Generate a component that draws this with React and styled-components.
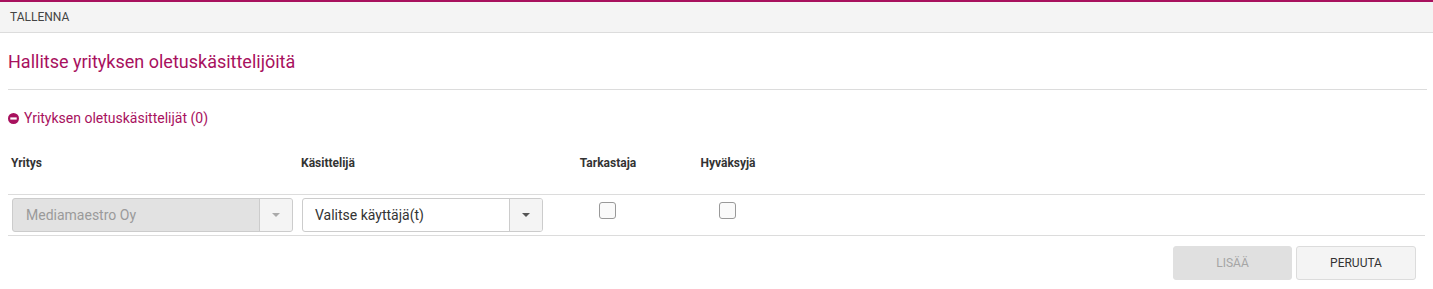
import React from "react";
import styled, { createGlobalStyle } from "styled-components";

const GlobalStyle = createGlobalStyle`
  body {
    margin: 0;
    font-family: Roboto, "Liberation Sans", Arial, sans-serif;
    background: #fff;
    color: #333;
  }
`;

const Toolbar = styled.div`
  border-top: 2px solid #a8115e;
  background-color: #f4f4f4;
  border-bottom: 1px solid #dcdcdc;
  height: 30px;
  display: flex;
  align-items: center;
  padding-left: 10px;
  font-size: 12px;
  color: #444;
  text-transform: uppercase;
`;

const Content = styled.div`
  padding: 0 8px;
`;

const Title = styled.h2`
  margin: 0;
  padding: 18px 0 17px;
  font-size: 18px;
  font-weight: 400;
  color: #a8115e;
  border-bottom: 1px solid #dcdcdc;
  margin-right: -2px;
`;

const SectionToggle = styled.div`
  display: flex;
  align-items: center;
  gap: 5px;
  margin-top: 19px;
  font-size: 14px;
  color: #a8115e;
  height: 18px;
`;

const Table = styled.div`
  margin-top: 29px;
`;

const Row = styled.div`
  display: grid;
  grid-template-columns: 290px 250px 120px 120px 1fr;
  align-items: center;
  height: ${(p) => (p.$head ? "38px" : "40px")};
  border-bottom: 1px solid #dcdcdc;
`;

const HeadCell = styled.div`
  font-size: 12px;
  font-weight: 700;
  color: #333;
  padding-left: ${(p) => (p.$center ? "0" : "3px")};
  text-align: ${(p) => (p.$center ? "center" : "left")};
  align-self: start;
`;

const Cell = styled.div`
  padding: 0 5px 0 4px;
  display: flex;
  justify-content: ${(p) => (p.$center ? "center" : "flex-start")};
`;

const SelectBox = styled.div`
  flex: 1;
  height: 32px;
  display: flex;
  border: 1px solid #ccc;
  border-radius: 3px;
  background-color: ${(p) => (p.$disabled ? "#e2e2e2" : "#fff")};
  overflow: hidden;
`;

const SelectValue = styled.div`
  flex: 1;
  display: flex;
  align-items: center;
  padding-left: ${(p) => (p.$disabled ? "13px" : "12px")};
  font-size: 14px;
  color: ${(p) => (p.$disabled ? "#9a9a9a" : "#333")};
`;

const SelectArrow = styled.div`
  width: 32px;
  border-left: 1px solid #ccc;
  background-color: #f4f4f4;
  display: flex;
  align-items: center;
  justify-content: center;
  &::after {
    content: "";
    border-left: 4px solid transparent;
    border-right: 4px solid transparent;
    border-top: 4px solid ${(p) => (p.$disabled ? "#aaa" : "#555")};
  }
`;

const Checkbox = styled.span`
  width: 15px;
  height: 15px;
  border: 1px solid #999;
  border-radius: 3px;
  background-color: #fafafa;
  margin-top: -9px;
`;

const Actions = styled.div`
  display: flex;
  justify-content: flex-end;
  gap: 4px;
  margin-top: 10px;
  padding-right: 9px;
`;

const Button = styled.button`
  width: ${(p) => p.$w}px;
  height: 34px;
  border-radius: 3px;
  font-family: inherit;
  font-size: 12px;
  text-transform: uppercase;
  border: 1px solid ${(p) => (p.disabled ? "#e0e0e0" : "#dcdcdc")};
  background-color: ${(p) => (p.disabled ? "#e0e0e0" : "#f4f4f4")};
  color: ${(p) => (p.disabled ? "#a5a5a5" : "#333")};
`;

const MinusIcon = () => (
  <svg width="11" height="11" viewBox="0 0 12 12">
    <circle cx="6" cy="6" r="6" fill="#a8115e" />
    <rect x="2.5" y="4.8" width="7" height="2.4" fill="#fff" />
  </svg>
);

const Select = ({ value, disabled }) => (
  <SelectBox $disabled={disabled}>
    <SelectValue $disabled={disabled}>{value}</SelectValue>
    <SelectArrow $disabled={disabled} />
  </SelectBox>
);

export default function App() {
  return (
    <>
      <GlobalStyle />
      <Toolbar>Tallenna</Toolbar>
      <Content>
        <Title>Hallitse yrityksen oletuskäsittelijöitä</Title>
        <SectionToggle>
          <MinusIcon />
          Yrityksen oletuskäsittelijät (0)
        </SectionToggle>
        <Table>
          <Row $head>
            <HeadCell>Yritys</HeadCell>
            <HeadCell>Käsittelijä</HeadCell>
            <HeadCell $center>Tarkastaja</HeadCell>
            <HeadCell $center>Hyväksyjä</HeadCell>
            <div />
          </Row>
          <Row>
            <Cell>
              <Select value="Mediamaestro Oy" disabled />
            </Cell>
            <Cell>
              <Select value="Valitse käyttäjä(t)" />
            </Cell>
            <Cell $center>
              <Checkbox />
            </Cell>
            <Cell $center>
              <Checkbox />
            </Cell>
            <div />
          </Row>
        </Table>
        <Actions>
          <Button $w={119} disabled>Lisää</Button>
          <Button $w={120}>Peruuta</Button>
        </Actions>
      </Content>
    </>
  );
}
